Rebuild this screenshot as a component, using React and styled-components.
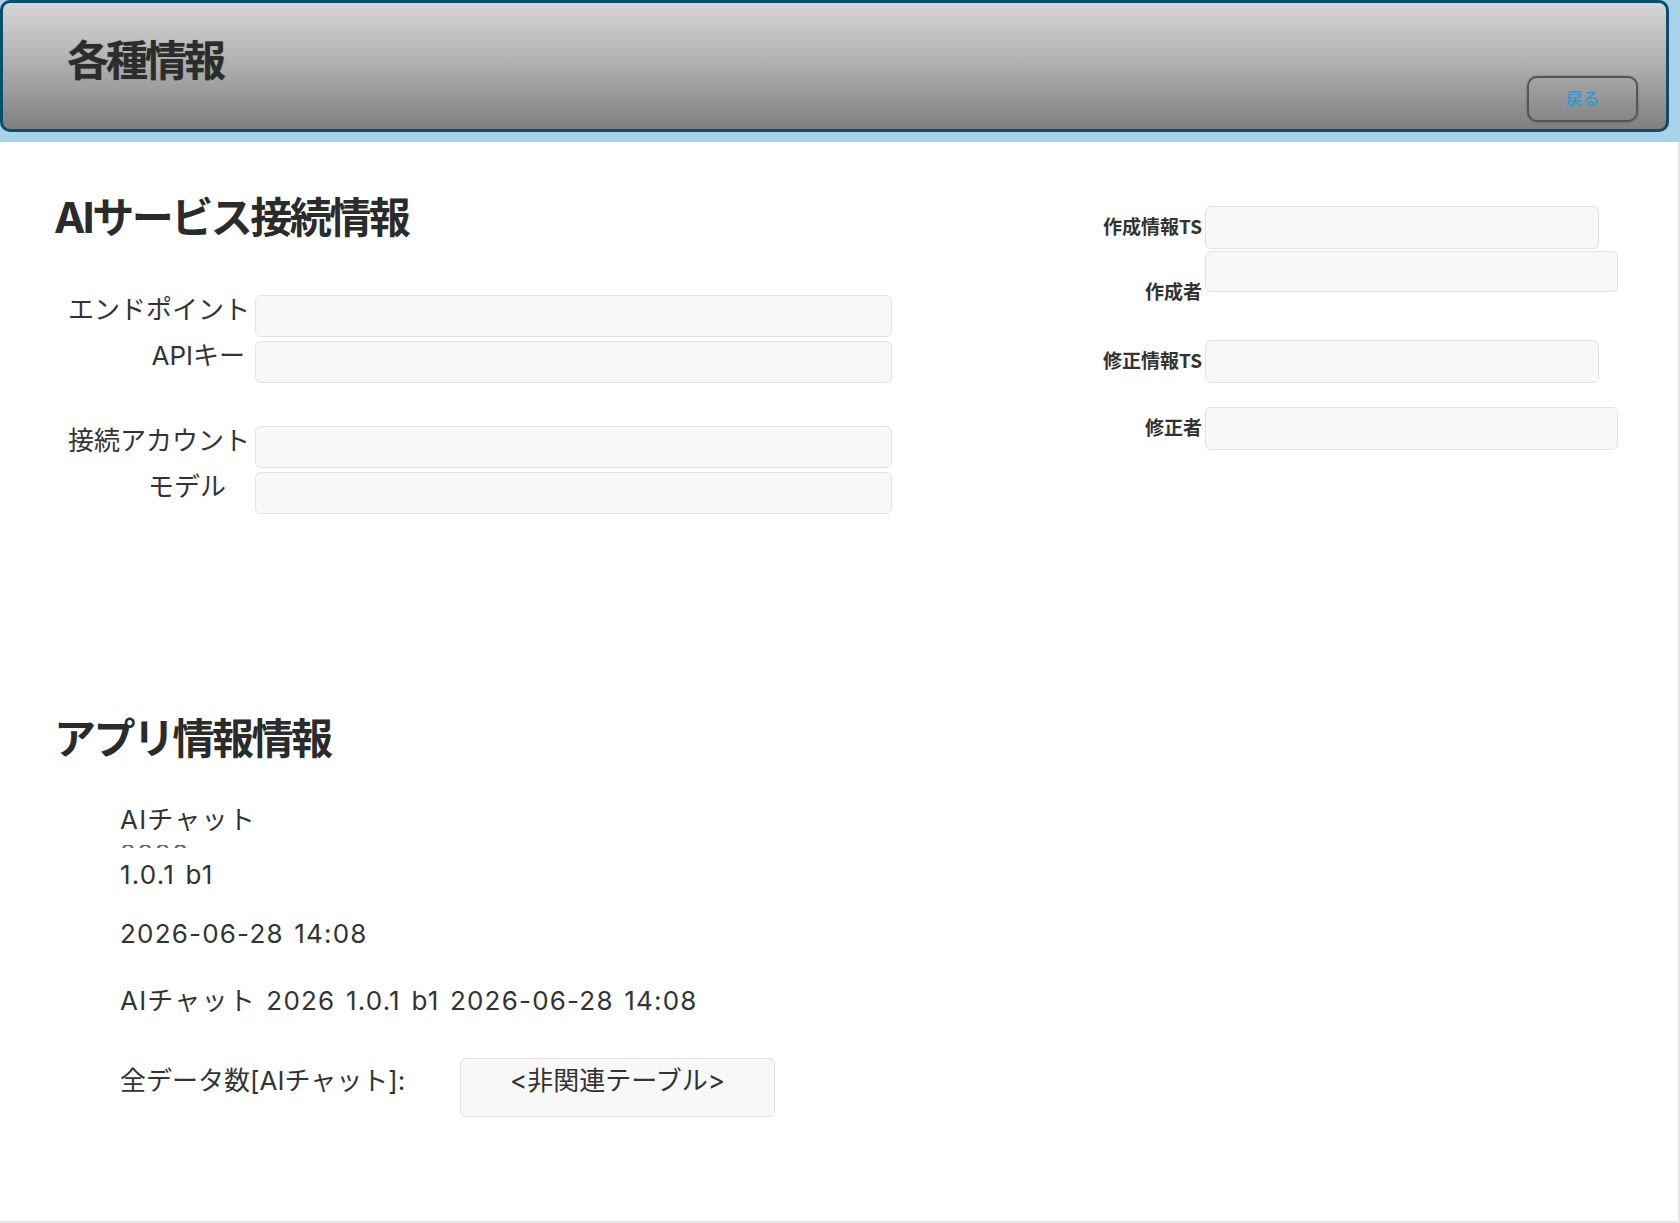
import React from 'react';
import styled, { createGlobalStyle } from 'styled-components';

const GlobalStyle = createGlobalStyle`
  html, body {
    margin: 0;
    padding: 0;
    background: #ffffff;
  }
  body {
    font-family: Inter, "Noto Sans CJK JP", sans-serif;
    color: #333333;
  }
`;

const connectionFields = [
  { label: 'エンドポイント', pr: 5 },
  { label: 'APIキー', pr: 10 },
  { label: '接続アカウント', pr: 5, gap: 43 },
  { label: 'モデル', pr: 29 },
];

const App = () => {
  return (
    <>
      <GlobalStyle />
      <Page>
        <HeaderBand>
          <Header>
            <PageTitle>各種情報</PageTitle>
            <BackButton type="button">戻る</BackButton>
          </Header>
        </HeaderBand>

        <Content>
          <TopSection>
            <LeftColumn>
              <SectionTitle>AIサービス接続情報</SectionTitle>
              <FormList>
                {connectionFields.map((f) => (
                  <FormRow key={f.label} $gap={f.gap}>
                    <FieldLabel $pr={f.pr}>{f.label}</FieldLabel>
                    <TextField $width={637} />
                  </FormRow>
                ))}
              </FormList>
            </LeftColumn>

            <RightColumn>
              <MetaRow>
                <MetaLabel>作成情報TS</MetaLabel>
                <TextField $width={394} $height={43} />
              </MetaRow>
              <MetaRow $top $mt={2}>
                <MetaLabel $pt={29}>作成者</MetaLabel>
                <TextField $width={413} $height={41} />
              </MetaRow>
              <MetaRow $mt={38}>
                <MetaLabel>修正情報TS</MetaLabel>
                <TextField $width={394} $height={43} />
              </MetaRow>
              <MetaRow $mt={24}>
                <MetaLabel>修正者</MetaLabel>
                <TextField $width={413} $height={43} />
              </MetaRow>
            </RightColumn>
          </TopSection>

          <AppSection>
            <SectionTitle>アプリ情報情報</SectionTitle>
            <InfoList>
              <InfoLine>AIチャット</InfoLine>
              <ClippedLine>
                <span>2026</span>
              </ClippedLine>
              <InfoLine>1.0.1 b1</InfoLine>
              <InfoLine $mt={25}>2026-06-28 14:08</InfoLine>
              <InfoLine $mt={33}>AIチャット 2026 1.0.1 b1 2026-06-28 14:08</InfoLine>
              <CountRow>
                <CountLabel>全データ数[AIチャット]:</CountLabel>
                <CountBox>&lt;非関連テーブル&gt;</CountBox>
              </CountRow>
            </InfoList>
          </AppSection>
        </Content>
      </Page>
    </>
  );
};

const Page = styled.div`
  width: 1680px;
  height: 1223px;
  display: flex;
  flex-direction: column;
  overflow: hidden;
`;

const HeaderBand = styled.div`
  background: #a8d2ea;
  padding: 0 11px 10px 0;
`;

const Header = styled.header`
  box-sizing: border-box;
  height: 132px;
  border: 3px solid #0b4d6c;
  border-radius: 10px;
  background: linear-gradient(180deg, #d6d6d6 0%, #b3b3b3 45%, #7f7f7f 100%);
  display: flex;
  justify-content: space-between;
  align-items: flex-start;
  padding: 0 28px 0 64px;
`;

const PageTitle = styled.h1`
  margin: 30px 0 0;
  font-family: "Noto Sans CJK JP", sans-serif;
  font-size: 42px;
  line-height: 50px;
  font-weight: 700;
  letter-spacing: -3px;
  color: #2c2c2c;
  text-shadow: 0 0 1px rgba(0, 0, 0, 0.4);
`;

const BackButton = styled.button`
  align-self: flex-end;
  margin-bottom: 7px;
  width: 111px;
  height: 46px;
  padding: 0 0 4px;
  border: 2px solid #555555;
  border-radius: 10px;
  background: transparent;
  box-shadow: 0 0 2px rgba(0, 0, 0, 0.35);
  font-family: "Noto Sans CJK JP", sans-serif;
  font-size: 17px;
  font-weight: 500;
  color: #2b9ad6;
  cursor: pointer;
`;

const Content = styled.main`
  flex: 1;
  box-sizing: border-box;
  background: #ffffff;
  border-right: 2px solid #e6e6e6;
  border-bottom: 2px solid #e6e6e6;
  padding: 0 0 0 54px;
`;

const TopSection = styled.section`
  display: flex;
  align-items: flex-start;
`;

const LeftColumn = styled.div`
  width: 838px;
  padding-top: 51px;
`;

const SectionTitle = styled.h2`
  margin: 0;
  font-size: 42px;
  line-height: 50px;
  font-weight: 700;
  letter-spacing: -2.5px;
  color: #2b2b2b;
`;

const FormList = styled.div`
  margin-top: 52px;
  display: flex;
  flex-direction: column;
`;

const FormRow = styled.div`
  display: grid;
  grid-template-columns: 201px 1fr;
  align-items: start;
  margin-top: ${(p) => (p.$gap ? `${p.$gap}px` : '4px')};
  &:first-child {
    margin-top: 0;
  }
`;

const FieldLabel = styled.label`
  text-align: right;
  padding-right: ${(p) => p.$pr}px;
  font-size: 26px;
  line-height: 30px;
  color: #333333;
  white-space: nowrap;
`;

const TextField = styled.div`
  box-sizing: border-box;
  width: ${(p) => p.$width}px;
  height: ${(p) => p.$height || 42}px;
  background: #f8f8f8;
  border: 1px solid #e2e2e2;
  border-radius: 6px;
`;

const RightColumn = styled.div`
  margin-left: 208px;
  padding-top: 64px;
  display: flex;
  flex-direction: column;
`;

const MetaRow = styled.div`
  display: grid;
  grid-template-columns: 105px auto;
  align-items: ${(p) => (p.$top ? 'start' : 'center')};
  margin-top: ${(p) => p.$mt || 0}px;
`;

const MetaLabel = styled.span`
  text-align: right;
  padding-right: 3px;
  padding-top: ${(p) => p.$pt || 0}px;
  padding-bottom: ${(p) => (p.$pt ? 0 : 3)}px;
  font-family: "Noto Sans CJK JP", sans-serif;
  font-size: 19px;
  line-height: 22px;
  font-weight: 700;
  color: #333333;
  white-space: nowrap;
`;

const AppSection = styled.section`
  margin-top: 200px;
`;

const InfoList = styled.div`
  margin-top: 39px;
  padding-left: 66px;
  display: flex;
  flex-direction: column;
  align-items: flex-start;
`;

const InfoLine = styled.div`
  margin-top: ${(p) => p.$mt || 0}px;
  font-size: 26px;
  line-height: 34px;
  letter-spacing: 1.2px;
  word-spacing: 2px;
  color: #333333;
  white-space: nowrap;
`;

const ClippedLine = styled.div`
  height: 3px;
  margin: 8px 0 10px;
  overflow: hidden;
  font-size: 26px;
  line-height: 26px;
  letter-spacing: 1.2px;
  color: #666666;

  span {
    display: block;
    margin-top: -4px;
  }
`;

const CountRow = styled.div`
  margin-top: 40px;
  display: flex;
  align-items: flex-start;
`;

const CountLabel = styled.span`
  width: 340px;
  padding-top: 6px;
  font-size: 26px;
  line-height: 34px;
  color: #333333;
  white-space: nowrap;
`;

const CountBox = styled.div`
  box-sizing: border-box;
  width: 315px;
  height: 59px;
  padding-top: 5px;
  background: #f8f8f8;
  border: 1px solid #e2e2e2;
  border-radius: 6px;
  text-align: center;
  font-size: 26px;
  line-height: 34px;
  color: #333333;
`;

export default App;
